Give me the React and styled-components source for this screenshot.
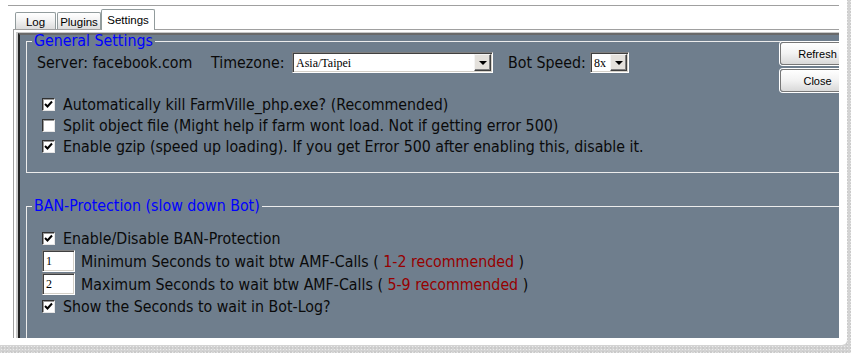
import React from 'react';
import styled, { createGlobalStyle } from 'styled-components';

const Global = createGlobalStyle`
  html, body { margin: 0; padding: 0; background: #ffffff; }
  body { font-family: "DejaVu Sans", "Liberation Sans", sans-serif; }
  * { box-sizing: border-box; }
`;

const Screen = styled.div`
  width: 851px;
  height: 353px;
  overflow: hidden;
  background-color: #d3d3d3;
  background-image: radial-gradient(rgba(255, 255, 255, 0.55) 0.7px, transparent 0.9px),
    radial-gradient(rgba(150, 150, 150, 0.35) 0.6px, transparent 0.8px);
  background-size: 3px 3px, 4px 4px;
  background-position: 0 0, 1px 2px;
`;

const Window = styled.div`
  width: 847px;
  height: 345px;
  background: #ffffff;
  border-bottom-right-radius: 5px;
`;

const Clip = styled.div`
  width: 839px;
  height: 338px;
  overflow: hidden;
  padding-top: 5px;
`;

const TopRule = styled.div`
  margin-left: 8px;
  height: 1px;
  background: #a0a0a0;
`;

const TabStrip = styled.div`
  position: relative;
  z-index: 2;
  display: flex;
  align-items: flex-end;
  height: 21px;
  margin: 3px 0 -1px 15px;
`;

const Tab = styled.div`
  width: ${(p) => p.$w}px;
  margin-left: ${(p) => p.$ml || 0}px;
  height: ${(p) => (p.$active ? 21 : 17)}px;
  margin-bottom: ${(p) => (p.$active ? 0 : 1)}px;
  border: 1px solid #919b9c;
  border-bottom: none;
  border-radius: 2px 2px 0 0;
  background: ${(p) =>
    p.$active ? '#ffffff' : 'linear-gradient(#ffffff, #f3f3f3 45%, #dcdcdc)'};
  font-family: "Liberation Sans", Arial, sans-serif;
  font-size: 11.5px;
  color: #000;
  display: flex;
  align-items: center;
  justify-content: center;
  padding-top: ${(p) => (p.$active ? 0 : 2)}px;
`;

const TabPanel = styled.div`
  margin-left: 13px;
  width: 900px;
  height: 400px;
  border-top: 1px solid #a0a0a0;
  border-left: 1px solid #a0a0a0;
  padding: 3px 0 0 4px;
`;

const Slate = styled.div`
  position: relative;
  height: 380px;
  background: #6f7e8d;
  border-top: 2px solid #6a6a6a;
  border-left: 2px solid #222222;
  box-shadow: -2px -1px 0 #c8c8c8;
  padding: 0 0 0 6px;
`;

const Group = styled.fieldset`
  margin: ${(p) => p.$mt || 0}px 0 0 0;
  padding: 0 0 ${(p) => p.$pb || 0}px 0;
  width: 1000px;
  min-width: 0;
  border: 1px solid #ececec;
  ${(p) => (p.$open ? 'height: 400px;' : '')}
`;

const Legend = styled.legend`
  margin-left: 5px;
  padding: 0 2px;
  font-size: 15.8px;
  font-stretch: condensed;
  line-height: 12px;
  color: #0000ff;
`;

const Body = styled.div`
  padding-left: ${(p) => p.$pl}px;
  padding-top: ${(p) => p.$pt || 0}px;
  display: flex;
  flex-direction: column;
`;

const TopRow = styled.div`
  display: flex;
  align-items: center;
  height: 21px;
  margin-bottom: 21px;
`;

const Label = styled.span`
  display: inline-block;
  ${(p) => (p.$w ? `width: ${p.$w}px;` : '')}
  ${(p) => (p.$ml ? `margin-left: ${p.$ml}px;` : '')}
  font-size: 15.8px;
  font-stretch: condensed;
  color: #0a0a0a;
  white-space: nowrap;
`;

const Combo = styled.div`
  position: relative;
  width: ${(p) => p.$w}px;
  height: 21px;
  background: #ffffff;
  border: 1px solid;
  border-color: #808080 #ffffff #ffffff #808080;
  box-shadow: inset 1px 1px 0 #404040, inset -1px -1px 0 #d4d0c8;
  font-family: "Liberation Serif", "Times New Roman", serif;
  font-size: 12px;
  line-height: 16px;
  padding: 2px 0 0 3px;
  color: #000;
`;

const DropButton = styled.div`
  position: absolute;
  right: 1px;
  top: 1px;
  width: 17px;
  height: 17px;
  background: #e4e1dc;
  border: 1px solid;
  border-color: #f4f4f4 #404040 #404040 #f4f4f4;
  box-shadow: inset -1px -1px 0 #808080;
  display: flex;
  align-items: center;
  justify-content: center;
`;

const Arrow = styled.span`
  width: 0;
  height: 0;
  border-left: 4px solid transparent;
  border-right: 4px solid transparent;
  border-top: 4px solid #000;
  margin-top: 1px;
`;

const CheckRow = styled.div`
  display: flex;
  align-items: center;
  height: ${(p) => p.$h || 21}px;
  margin-top: ${(p) => p.$mt || 0}px;
`;

const Box = styled.span`
  width: 13px;
  height: 13px;
  flex: none;
  margin-right: 8px;
  background: #ffffff;
  border: 1px solid;
  border-color: #303030 #e6e6e6 #e6e6e6 #303030;
  box-shadow: inset 1px 1px 0 #9a9a9a;
  display: flex;
  align-items: center;
  justify-content: center;
`;

const NumInput = styled.div`
  width: 33px;
  height: 22px;
  flex: none;
  margin-right: 6px;
  background: #ffffff;
  border: 1px solid;
  border-color: #808080 #ffffff #ffffff #808080;
  box-shadow: inset 1px 1px 0 #404040, inset -1px -1px 0 #d4d0c8;
  font-family: "Liberation Serif", "Times New Roman", serif;
  font-size: 12px;
  line-height: 14px;
  padding: 3px 0 0 3px;
`;

const Red = styled.span`
  color: #960000;
`;

const Buttons = styled.div`
  position: absolute;
  left: 760px;
  top: 7px;
  display: flex;
  flex-direction: column;
  gap: 4px;
`;

const Button = styled.div`
  width: 75px;
  height: 23px;
  border: 1px solid #777777;
  border-radius: 3px;
  box-shadow: 0 0 0 1px #ffffff;
  background: linear-gradient(#ffffff, #f2f2f2 50%, #d9d9d9);
  font-family: "Liberation Sans", Arial, sans-serif;
  font-size: 11px;
  color: #000;
  display: flex;
  align-items: center;
  justify-content: center;
`;

const Check = ({ on }) => (
  <Box>
    {on && (
      <svg width="9" height="9" viewBox="0 0 9 9">
        <path d="M1 4 L3.5 6.5 L8 1.5" fill="none" stroke="#000" strokeWidth="2" />
      </svg>
    )}
  </Box>
);

export default function App() {
  return (
    <>
      <Global />
      <Screen>
        <Window>
          <Clip>
            <TopRule />
            <TabStrip>
              <Tab $w={41}>Log</Tab>
              <Tab $w={44} $ml={1}>Plugins</Tab>
              <Tab $w={54} $active>Settings</Tab>
            </TabStrip>
            <TabPanel>
              <Slate>
                <Group $pb={15}>
                  <Legend>General Settings</Legend>
                  <Body $pl={10} $pt={5}>
                    <TopRow>
                      <Label $w={174}>Server: facebook.com</Label>
                      <Label $w={81}>Timezone:</Label>
                      <Combo $w={201}>
                        Asia/Taipei
                        <DropButton><Arrow /></DropButton>
                      </Combo>
                      <Label $w={82} $ml={15}>Bot Speed:</Label>
                      <Combo $w={39}>
                        8x
                        <DropButton><Arrow /></DropButton>
                      </Combo>
                    </TopRow>
                  </Body>
                  <Body $pl={15}>
                    <CheckRow>
                      <Check on />
                      <Label>Automatically kill FarmVille_php.exe? (Recommended)</Label>
                    </CheckRow>
                    <CheckRow>
                      <Check />
                      <Label>Split object file (Might help if farm wont load. Not if getting error 500)</Label>
                    </CheckRow>
                    <CheckRow>
                      <Check on />
                      <Label>Enable gzip (speed up loading). If you get Error 500 after enabling this, disable it.</Label>
                    </CheckRow>
                  </Body>
                </Group>
                <Group $mt={27} $open>
                  <Legend>BAN-Protection (slow down Bot)</Legend>
                  <Body $pl={15} $pt={16}>
                    <CheckRow>
                      <Check on />
                      <Label>Enable/Disable BAN-Protection</Label>
                    </CheckRow>
                    <CheckRow $h={22} $mt={1}>
                      <NumInput>1</NumInput>
                      <Label>Minimum Seconds to wait btw AMF-Calls ( <Red>1-2 recommended</Red> )</Label>
                    </CheckRow>
                    <CheckRow $h={22} $mt={1}>
                      <NumInput>2</NumInput>
                      <Label>Maximum Seconds to wait btw AMF-Calls ( <Red>5-9 recommended</Red> )</Label>
                    </CheckRow>
                    <CheckRow $mt={1}>
                      <Check on />
                      <Label>Show the Seconds to wait in Bot-Log?</Label>
                    </CheckRow>
                  </Body>
                </Group>
                <Buttons>
                  <Button>Refresh</Button>
                  <Button>Close</Button>
                </Buttons>
              </Slate>
            </TabPanel>
          </Clip>
        </Window>
      </Screen>
    </>
  );
}
